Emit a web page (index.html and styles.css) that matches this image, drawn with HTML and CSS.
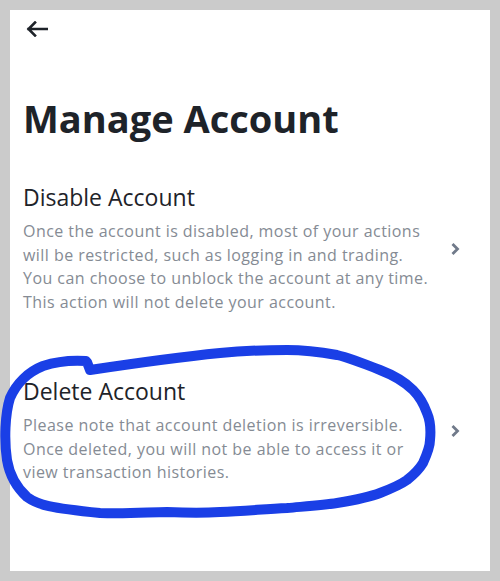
FILE: index.html
```html
<!DOCTYPE html>
<html lang="en">
<head>
    <meta charset="UTF-8">
    <meta name="viewport" content="width=device-width, initial-scale=1.0">
    <title>Manage Account</title>
    <link rel="stylesheet" href="styles.css">
</head>
<body>
    <div class="screen">
        <div class="topbar">
            <svg class="back" width="22" height="16" viewBox="0 0 22 16">
                <path d="M21 8H2.5M9 1.5L2.5 8L9 14.5" fill="none" stroke="#1e2329" stroke-width="2.6" stroke-linecap="square"/>
            </svg>
        </div>

        <h1 class="title">Manage Account</h1>

        <div class="option">
            <div class="option-text">
                <h2>Disable Account</h2>
                <p>Once the account is disabled, most of your actions will be restricted, such as logging in and trading. You can choose to unblock the account at any time. This action will not delete your account.</p>
            </div>
            <svg class="chevron" width="10" height="14" viewBox="0 0 10 14">
                <path d="M2.5 2L7.5 7L2.5 12" fill="none" stroke="#707a8a" stroke-width="2.8"/>
            </svg>
        </div>

        <div class="option option-delete">
            <div class="option-text">
                <h2>Delete Account</h2>
                <p>Please note that account deletion is irreversible. Once deleted, you will not be able to access it or view transaction histories.</p>
            </div>
            <svg class="chevron" width="10" height="14" viewBox="0 0 10 14">
                <path d="M2.5 2L7.5 7L2.5 12" fill="none" stroke="#707a8a" stroke-width="2.8"/>
            </svg>

            <!-- marcação à mão por cima do item -->
            <svg class="scribble" width="500" height="200" viewBox="0 330 500 200">
                <path d="M86 361 C70 360 55 362 43 366 C28 372 16 384 10 398 C5 414 4 440 7 460 C9 472 15 486 27 497 C38 505 50 508 100 513 C130 514 150 512 167 512 C190 513 205 513 220 512 C245 511 265 509 287 508 C310 506 325 505 337 503 C355 500 370 497 380 493 C393 488 400 485 407 480 C416 473 420 468 423 463 C428 452 430 446 430 440 C431 430 430 420 427 413 C423 402 419 396 413 390 C404 381 393 375 380 370 C365 364 350 358 337 355 C320 352 305 350 287 350 C265 350 240 351 220 353 C180 357 130 364 90 370 L87 362"
                      fill="none" stroke="#1a3fe6" stroke-width="10" stroke-linecap="round" stroke-linejoin="round"/>
            </svg>
        </div>
    </div>
</body>
</html>
```

FILE: styles.css
```css
body {
    margin: 0;
    padding: 10px;
    background-color: #cbcbcb;
    font-family: "Open Sans", "Noto Sans", sans-serif;
}
.screen {
    position: relative;
    background-color: #ffffff;
    height: 561px;
    padding: 0 13px;
    box-sizing: border-box;
}
.topbar {
    height: 16px;
    padding-top: 11px;
    padding-left: 3px;
}
.back {
    display: block;
}
.title {
    margin: 58px 0 0;
    font-size: 38px;
    line-height: 46px;
    font-weight: 700;
    color: #1e2329;
}
.option {
    display: flex;
    align-items: center;
    margin-top: 41px;
}
.option-delete {
    margin-top: 61px;
}
.option-text {
    width: 412px;
}
.option h2 {
    margin: 0;
    font-size: 23px;
    line-height: 30px;
    font-weight: 400;
    color: #1e2329;
}
.option p {
    margin: 8px 0 0;
    font-size: 16px;
    line-height: 23.7px;
    letter-spacing: 0.45px;
    color: #858b94;
}
.chevron {
    display: block;
    margin-left: 15px;
    margin-top: 2px;
}
.scribble {
    position: absolute;
    left: -10px;
    top: 320px;
    pointer-events: none;
}
```
